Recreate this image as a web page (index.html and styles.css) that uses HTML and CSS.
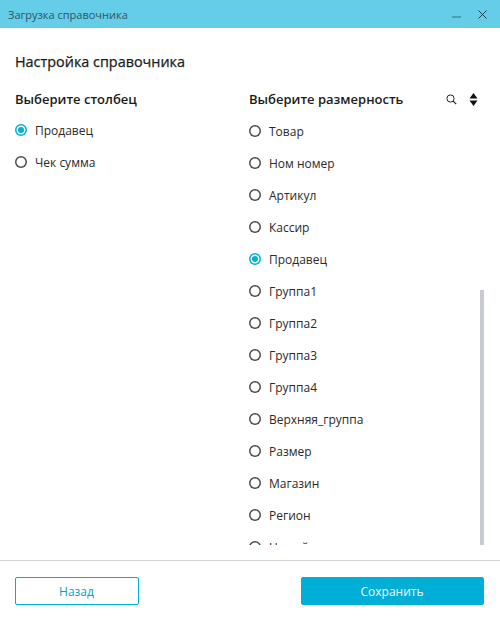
FILE: index.html
```html
<!DOCTYPE html>
<html lang="ru">
<head>
<meta charset="utf-8">
<title>Загрузка справочника</title>
<link rel="stylesheet" href="styles.css">
</head>
<body>
<div class="window">
  <header class="titlebar">
    <span class="title">Загрузка справочника</span>
    <div class="win-controls">
      <span class="minimize"></span>
      <svg class="close" width="9" height="9" viewBox="0 0 9 9"><path d="M.5.5l8 8M8.500.5l-8 8" stroke="#2b3a4a" stroke-width="1" fill="none"/></svg>
    </div>
  </header>
  <main class="content">
    <h1 class="heading">Настройка справочника</h1>
    <div class="columns">
      <section class="col-left">
        <h2 class="col-title">Выберите столбец</h2>
        <div class="list-left">
          <label class="radio-row"><span class="radio checked"></span>Продавец</label>
          <label class="radio-row"><span class="radio"></span>Чек сумма</label>
        </div>
      </section>
      <section class="col-right">
        <div class="col-head">
          <h2 class="col-title">Выберите размерность</h2>
          <div class="tools">
            <svg width="11" height="11" viewBox="0 0 11 11"><circle cx="4.500" cy="4.500" r="3.600" fill="none" stroke="#222" stroke-width="1"/><path d="M7.200 7.200l3 3" stroke="#222" stroke-width="1.200"/></svg>
            <svg width="9" height="13" viewBox="0 0 9 13"><path d="M4.500 0L8.500 5.400H.5zM.5 7.600h8L4.500 13z" fill="#111"/></svg>
          </div>
        </div>
        <div class="scroll-wrap">
          <div class="list-right">
            <label class="radio-row"><span class="radio"></span>Товар</label>
            <label class="radio-row"><span class="radio"></span>Ном номер</label>
            <label class="radio-row"><span class="radio"></span>Артикул</label>
            <label class="radio-row"><span class="radio"></span>Кассир</label>
            <label class="radio-row"><span class="radio checked"></span>Продавец</label>
            <label class="radio-row"><span class="radio"></span>Группа1</label>
            <label class="radio-row"><span class="radio"></span>Группа2</label>
            <label class="radio-row"><span class="radio"></span>Группа3</label>
            <label class="radio-row"><span class="radio"></span>Группа4</label>
            <label class="radio-row"><span class="radio"></span>Верхняя_группа</label>
            <label class="radio-row"><span class="radio"></span>Размер</label>
            <label class="radio-row"><span class="radio"></span>Магазин</label>
            <label class="radio-row"><span class="radio"></span>Регион</label>
            <label class="radio-row"><span class="radio"></span>Новый</label>
          </div>
          <div class="scrollbar"></div>
        </div>
      </section>
    </div>
  </main>
  <footer class="footer">
    <button class="btn btn-outline">Назад</button>
    <button class="btn btn-primary">Сохранить</button>
  </footer>
</div>
</body>
</html>
```
FILE: styles.css
```css
* { box-sizing: border-box; }
html, body { margin: 0; padding: 0; }
body { font-family: "Open Sans", "Noto Sans", sans-serif; background: #fff; color: #1a1a1a; }
.window { width: 500px; height: 620px; display: flex; flex-direction: column; background: #fff; overflow: hidden; }
.titlebar { height: 28px; flex: none; background: #65cde8; display: flex; align-items: center; justify-content: space-between; padding: 0 13px 0 8px; }
.title { font-size: 11px; color: #2f5563; }
.win-controls { display: flex; align-items: center; gap: 17px; }
.minimize { width: 9px; height: 2px; background: #4d9db3; margin-top: 6px; }
.close { display: block; }
.content { flex: 1; min-height: 0; padding: 24px 16px 0 15px; display: flex; flex-direction: column; }
.heading { margin: 0; font-size: 14.4px; line-height: 20px; font-weight: 400; -webkit-text-stroke: 0.25px #1a1a1a; color: #1a1a1a; }
.columns { flex: 1; min-height: 0; display: flex; margin-top: 18px; }
.col-left { width: 234px; flex: none; }
.col-right { flex: 1; min-width: 0; display: flex; flex-direction: column; }
.col-title { margin: 0; font-size: 13px; line-height: 18px; font-weight: 600; color: #1a1a1a; }
.col-head { display: flex; align-items: center; justify-content: space-between; padding-right: 6px; }
.tools { display: flex; align-items: center; gap: 12px; }
.tools svg { display: block; }
.list-left { margin-top: 6px; }
.scroll-wrap { flex: 1; min-height: 0; margin: 7px 0 15px; position: relative; overflow: hidden; }
.list-right { height: 100%; overflow: hidden; }
.radio-row { display: flex; align-items: center; height: 32px; font-size: 12px; color: #2a2a2a; }
.radio { width: 12px; height: 12px; box-shadow: inset 0 0 0 1.5px #4a4a4a; border-radius: 50%; margin-right: 8px; flex: none; }
.radio.checked { box-shadow: inset 0 0 0 1.5px #00aed6; position: relative; }
.radio.checked::after { content: ""; position: absolute; left: 3px; top: 3px; width: 6px; height: 6px; border-radius: 50%; background: #00aed6; }
.scrollbar { position: absolute; right: 0; bottom: 0; width: 4px; height: 255px; background: #c8ccd0; }
.footer { height: 60px; flex: none; border-top: 1px solid #d2d2d2; display: flex; justify-content: space-between; padding: 16px 16px 0 15px; align-items: flex-start; }
.btn { height: 28px; border-radius: 2px; font-family: inherit; font-size: 12px; padding: 0 1px 0 0; }
.btn-outline { width: 124px; background: #fff; border: 1px solid #00aed6; color: #00a2cc; }
.btn-primary { width: 183px; background: #00aed6; border: 1px solid #00aed6; color: #eafaff; }
```
